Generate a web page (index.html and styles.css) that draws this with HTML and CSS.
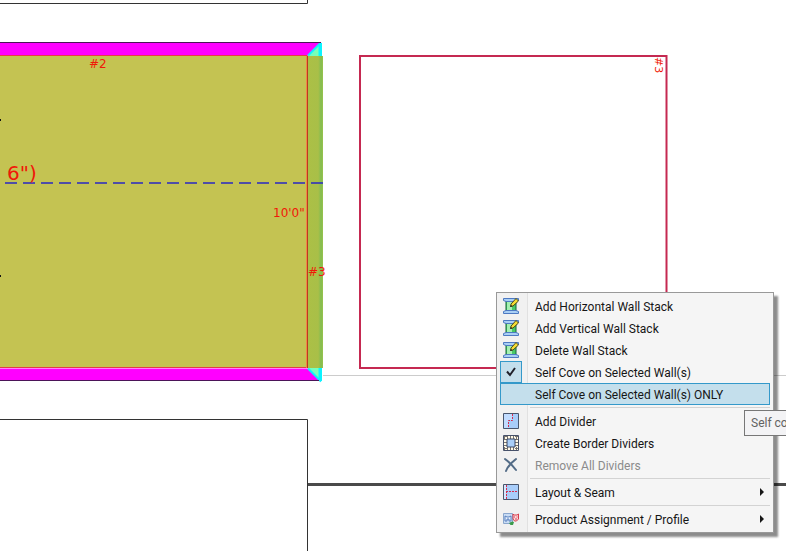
FILE: index.html
```html
<!DOCTYPE html>
<html lang="en">
<head>
<meta charset="utf-8">
<title>Floor plan</title>
<link rel="stylesheet" href="styles.css">
</head>
<body>
<main class="workspace">
  <svg class="plan" role="img" aria-label="Floor plan">
    <defs>
      <linearGradient id="cove"><stop offset="0" stop-color="#abc046"/><stop offset=".68" stop-color="#a9bf48"/><stop offset=".88" stop-color="#82bd50"/><stop offset="1" stop-color="#9cc24c"/></linearGradient>
      <linearGradient id="corner"><stop offset="0" stop-color="#68ffc8"/><stop offset=".7" stop-color="#7dffb5"/><stop offset=".8" stop-color="#00ffff"/></linearGradient>
    </defs>
    <path d="M0 3.500H307.500V0" class="outline"/>
    <path d="M0 419.500H307.500V560" class="outline"/>
    <path d="M323 375.500H2000" class="guide"/>
    <path d="M308 484.500H2000" class="heavy"/>
    <path d="M0 43H320L308 55.500H0ZM0 368.500H308L320 381H0Z" fill="#f0f"/>
    <path d="M308 56L321 43H322V56ZM308 368L321 381H322V368Z" fill="url(#corner)"/>
    <path d="M308 55.500L321 42.500M308 368.500L321 381.500M320.500 44V56M320.500 368V381" stroke="#10efff" stroke-width="2"/>
    <path d="M0 42.500H321M0 380.500H319" stroke="#4b1458"/>
    <rect x="0" y="56" width="308" height="312" fill="#c4c352"/>
    <rect x="308" y="56" width="15" height="312" fill="url(#cove)"/>
    <path d="M0 55.500H307.500M0 367.500H307.500" stroke="#e63b49"/>
    <path d="M306.500 56V368" stroke="#f08646"/>
    <path d="M307.500 56V368" stroke="#bb3b20"/>
    <path d="M5 183H323" stroke="#2828c4" stroke-width="1.500" stroke-dasharray="12 6"/>
    <path d="M0 119h1v2H0zM0 275h1v2H0z" fill="#111"/>
    <rect x="360" y="56" width="306.500" height="312" fill="#fff" stroke="#c52951" stroke-width="2"/>
    <text x="89" y="68" class="tag">#2</text>
    <text x="7" y="180" class="size">6")</text>
    <text x="273" y="217" class="tag">10'0"</text>
    <text x="308" y="276" class="tag">#3</text>
    <text transform="translate(655 57) rotate(90)" class="tag small">#3</text>
  </svg>

  <svg class="symbols" aria-hidden="true">
    <symbol id="spool" viewBox="0 0 16 16">
      <path d="M3 3H13V13H3Z" fill="#49c968" stroke="#17633a"/>
      <path d="M4 4H9V12H4Z" fill="#a5efb2"/>
      <path d="M.5.500H15.500V2.500L13 3.500H3L.5 2.500ZM.5 15.500H15.500V13.500L13 12.500H3L.5 13.500Z" fill="#a9cff5" stroke="#4d79c2"/>
      <path d="M7.500 8.500L8 6L13 .5L15.500 3L10 8Z" fill="#f5dc32" stroke="#4d481a"/>
      <path d="M7 9L8 7L9.500 8.200Z" fill="#222"/>
    </symbol>
    <symbol id="divider" viewBox="0 0 16 16">
      <path d="M.5.500H15.500V15.500H.5Z" fill="#a8cdfa" stroke="#49566e"/>
      <path d="M1 1H9V7H5V15H1Z" fill="#c1dcff"/>
      <path d="M9.500 1V7.500H5.500V15" fill="none" stroke="#d72b4c" stroke-dasharray="2 1"/>
    </symbol>
    <symbol id="border" viewBox="0 0 16 16">
      <path d="M.5.500H15.500V15.500H.5Z" fill="#fff9e8" stroke="#46516a"/>
      <path d="M2.500 1V15M13.500 1V15M1 2.500H15M1 13.500H15" stroke="#77736e" stroke-width="3" stroke-dasharray="1 2"/>
      <path d="M4 4H12V12H4Z" fill="#a9cef9" stroke="#3c4864"/>
    </symbol>
    <symbol id="remove" viewBox="0 0 16 16">
      <path d="M2 2C6 5 10 9 13 13M13 2C9 5 5 9 3 14" fill="none" stroke="#526b86" stroke-width="2" stroke-linecap="round"/>
    </symbol>
    <symbol id="seam" viewBox="0 0 16 16">
      <path d="M.5.500H15.500V15.500H.5Z" fill="#a8cdfa" stroke="#49566e"/>
      <path d="M1 1H3V15H1Z" fill="#d6e7ff"/>
      <path d="M3.500 1V15M3 7.500H15" stroke="#d72b4c" stroke-dasharray="2 1"/>
    </symbol>
    <symbol id="product" viewBox="0 0 16 16">
      <path d="M.5 2.500H9.500V12.500H.5Z" fill="#c9dcf4" stroke="#8aa6cd"/>
      <path d="M2 5V10H4V8H6V10H8V5L6 6H4Z" fill="#e9f2ff" stroke="#567fbd"/>
      <path d="M10 3L11 4H14L15.500 3V8L13.500 10H11.500L10 8Z" fill="#fbd9dc" stroke="#d93c4b"/>
      <path d="M11 6H12M13.500 6H14.500M12 8H14" stroke="#d93c4b"/>
      <path d="M6 12L9 10.500L11 11L10 14L7.500 14Z" fill="#3c9b4d"/>
    </symbol>
    <symbol id="check" viewBox="0 0 16 16">
      <path d="M4 7.500L7 11L12 4" fill="none" stroke="#20202a" stroke-width="2"/>
    </symbol>
  </svg>

  <div class="menu" role="menu">
    <button class="item" role="menuitem"><span class="icon"><svg><use href="#spool"/></svg></span><span class="label">Add Horizontal Wall Stack</span></button>
    <button class="item" role="menuitem"><span class="icon"><svg><use href="#spool"/></svg></span><span class="label">Add Vertical Wall Stack</span></button>
    <button class="item" role="menuitem"><span class="icon"><svg><use href="#spool"/></svg></span><span class="label">Delete Wall Stack</span></button>
    <button class="item" role="menuitemcheckbox" aria-checked="true"><span class="icon checked"><svg><use href="#check"/></svg></span><span class="label">Self Cove on Selected Wall(s)</span></button>
    <button class="item active" role="menuitemcheckbox" aria-checked="false"><span class="icon"></span><span class="label">Self Cove on Selected Wall(s) ONLY</span></button>
    <hr class="separator">
    <button class="item" role="menuitem"><span class="icon"><svg><use href="#divider"/></svg></span><span class="label">Add Divider</span></button>
    <button class="item" role="menuitem"><span class="icon"><svg><use href="#border"/></svg></span><span class="label">Create Border Dividers</span></button>
    <button class="item" role="menuitem" disabled><span class="icon"><svg><use href="#remove"/></svg></span><span class="label">Remove All Dividers</span></button>
    <hr class="separator">
    <button class="item submenu" role="menuitem" aria-haspopup="true"><span class="icon"><svg><use href="#seam"/></svg></span><span class="label">Layout &amp; Seam</span></button>
    <hr class="separator">
    <button class="item submenu" role="menuitem" aria-haspopup="true"><span class="icon"><svg><use href="#product"/></svg></span><span class="label">Product Assignment / Profile</span></button>
  </div>
  <div class="tooltip" role="tooltip">Self cove</div>
</main>
</body>
</html>
```
FILE: styles.css
```css
* { box-sizing: border-box; }

body { margin: 0; background: #fff; }

.workspace {
  position: relative;
  height: 100vh;
  overflow: hidden;
  font: 12px/16px Roboto, "Open Sans", sans-serif;
}

.plan { display: block; width: 100%; height: 100%; }
.symbols { display: none; }

.outline { fill: none; stroke: #333; }
.guide { stroke: #ccc; }
.heavy { stroke: #4a4a4a; stroke-width: 3; }

.tag { fill: #f01808; font: 12px "DejaVu Sans", sans-serif; }
.small { font-size: 11px; }
.size { fill: #f01808; font: 20px "DejaVu Sans", sans-serif; }

.menu {
  position: absolute;
  top: 292px;
  left: 496px;
  width: 278px;
  padding: 2px 3px;
  border: 1px solid #999;
  background: linear-gradient(90deg, #f1f1f1 30px, #e1e1e1 30px, #e1e1e1 31px, #f5f5f5 31px);
  box-shadow: 4px 4px 2px rgba(0, 0, 0, .45);
}

.item {
  display: flex;
  align-items: center;
  gap: 13px;
  width: 100%;
  height: 22px;
  padding: 0;
  border: 0;
  background: none;
  color: #161616;
  font: inherit;
  text-align: left;
  white-space: nowrap;
}
.item:disabled { color: #8b8b8b; }
.item.active { background: #c4dfec; box-shadow: inset 0 0 0 1px #3499ca; }

.label { padding-top: 2px; }

.icon {
  display: grid;
  place-items: center;
  width: 22px;
  height: 22px;
}
.icon svg { width: 16px; height: 16px; }
.checked { background: #c4dfec; box-shadow: inset 0 0 0 1px #3499ca; }

.submenu::after {
  content: "";
  margin: 0 6px 0 auto;
  border: 4px solid transparent;
  border-left-color: #161616;
  border-right-width: 0;
}

.separator {
  height: 1px;
  margin: 2px 0 2px 30px;
  border: 0;
  background: #d3d3d3;
}

.tooltip {
  position: absolute;
  top: 410px;
  left: 744px;
  padding: 4px 6px;
  border: 1px solid #777;
  background: #f3f3f5;
  color: #626262;
  white-space: nowrap;
}
```
